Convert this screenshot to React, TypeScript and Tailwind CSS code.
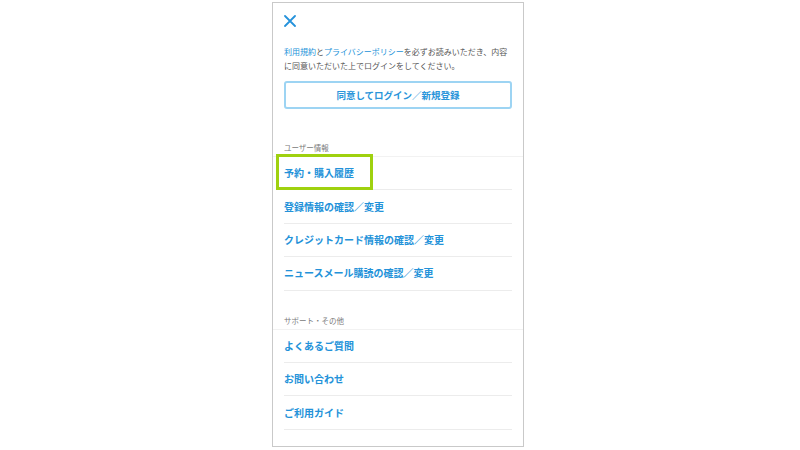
import React from "react";

const userItems = [
  "予約・購入履歴",
  "登録情報の確認／変更",
  "クレジットカード情報の確認／変更",
  "ニュースメール購読の確認／変更",
];

const supportItems = ["よくあるご質問", "お問い合わせ", "ご利用ガイド"];

function MenuItem({ label, highlight }: { label: string; highlight?: boolean }) {
  return (
    <div className="relative mx-[11px] h-[33.4px] border-b border-[#ececec] flex items-center">
      <span className="text-[10px] font-bold text-[#2392d9] leading-none">{label}</span>
      {highlight && (
        <div className="absolute left-[-8.5px] top-[-3.5px] w-[97px] h-[36px] border-[3px] border-[#9fd10f]" />
      )}
    </div>
  );
}

function SectionHeader({ title }: { title: string }) {
  return (
    <div className="h-[17px] border-b border-[#f2f2f2] px-[11px] flex items-center">
      <span className="text-[7.5px] text-[#7a7a7a] leading-none">{title}</span>
    </div>
  );
}

export default function App() {
  return (
    <div
      className="w-[800px] h-[450px] bg-white pt-[2px]"
      style={{ fontFamily: '"Noto Sans CJK JP", "Noto Sans", sans-serif' }}
    >
      <div className="ml-[272px] w-[252px] h-[445px] border border-[#c9c9c9] bg-white">
        <div className="px-[11px] pt-[12px]">
          <svg width="12" height="12" viewBox="0 0 12 12" className="block">
            <path d="M1 1 L11 11 M11 1 L1 11" stroke="#2592db" strokeWidth="1.8" strokeLinecap="round" />
          </svg>
        </div>
        <p className="px-[11px] mt-[18px] text-[8px] leading-[14px] text-[#555]">
          <span className="text-[#2392d9]">利用規約</span>と<span className="text-[#2392d9]">プライバシーポリシー</span>を必ずお読みいただき、内容に同意いただいた上でログインをしてください。
        </p>
        <div className="px-[11px] mt-[8px]">
          <button className="w-full h-[28px] border-2 border-[#9dd4f3] rounded-[3px] text-[9.5px] font-bold text-[#2a95da] flex items-center justify-center">
            同意してログイン／新規登録
          </button>
        </div>

        <div className="mt-[31px]">
          <SectionHeader title="ユーザー情報" />
          {userItems.map((label, i) => (
            <MenuItem key={label} label={label} highlight={i === 0} />
          ))}
        </div>

        <div className="mt-[22px]">
          <SectionHeader title="サポート・その他" />
          {supportItems.map((label) => (
            <MenuItem key={label} label={label} />
          ))}
        </div>
      </div>
    </div>
  );
}
